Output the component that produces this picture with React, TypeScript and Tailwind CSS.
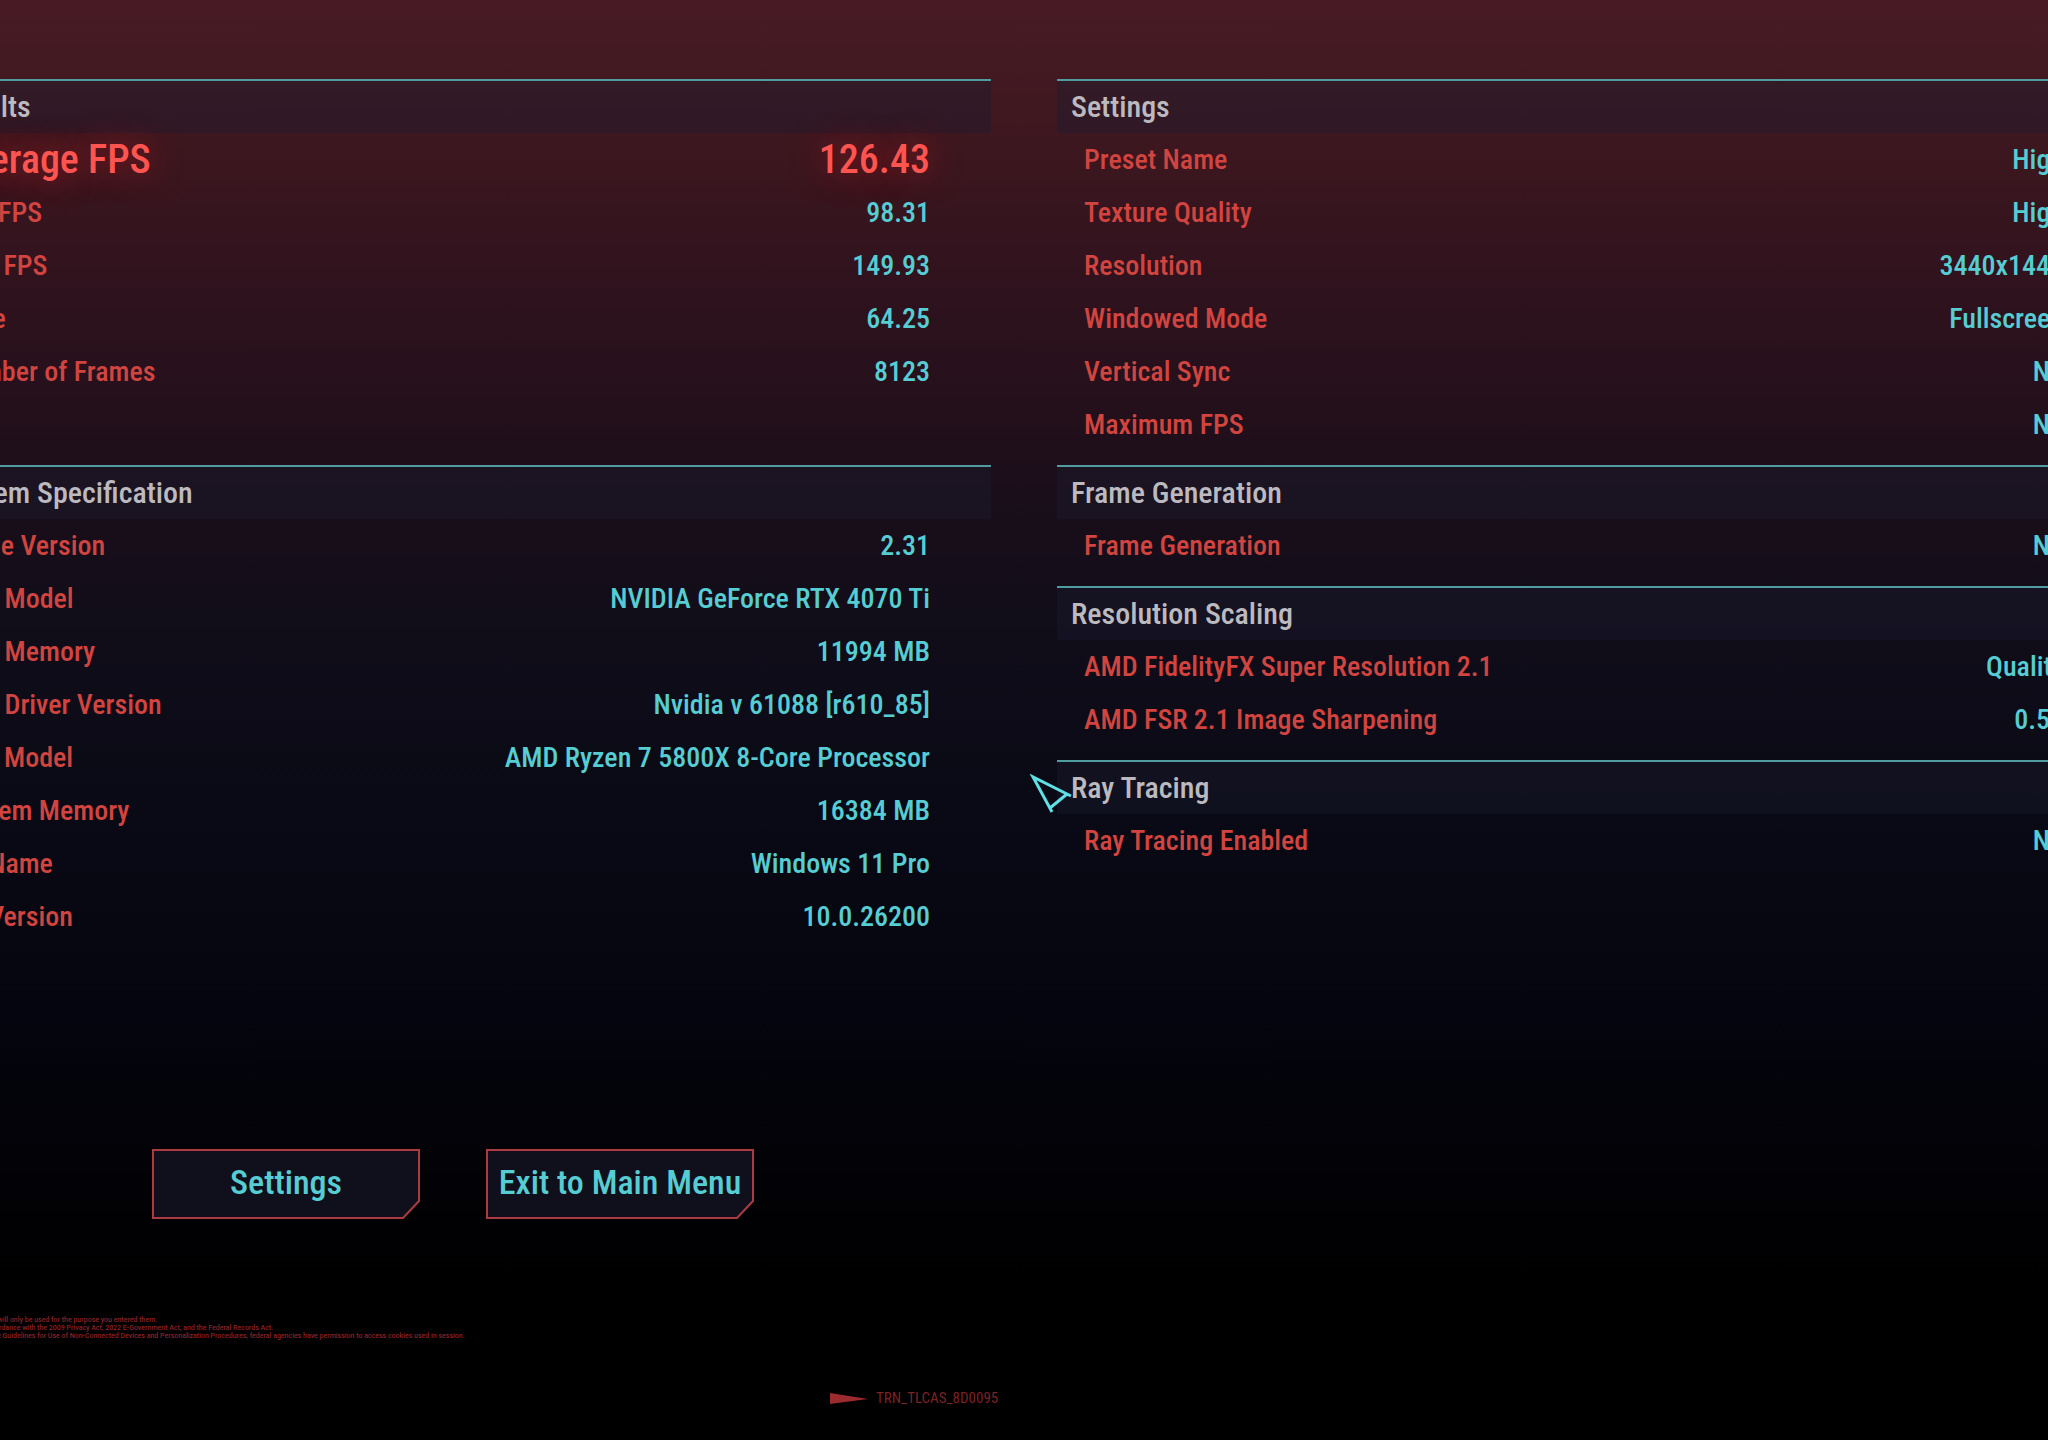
import type { ReactNode } from 'react'

interface Row {
  label: string
  value: string
  highlight?: boolean
}

interface SectionProps {
  title: string
  rows: Row[]
  className?: string
  labelPadding?: string
  valuePadding?: string
}

const results: Row[] = [
  { label: 'Average FPS', value: '126.43', highlight: true },
  { label: 'Min FPS', value: '98.31' },
  { label: 'Max FPS', value: '149.93' },
  { label: 'Time', value: '64.25' },
  { label: 'Number of Frames', value: '8123' },
]

const system: Row[] = [
  { label: 'Game Version', value: '2.31' },
  { label: 'GPU Model', value: 'NVIDIA GeForce RTX 4070 Ti' },
  { label: 'GPU Memory', value: '11994 MB' },
  { label: 'GPU Driver Version', value: 'Nvidia v 61088 [r610_85]' },
  { label: 'CPU Model', value: 'AMD Ryzen 7 5800X 8-Core Processor' },
  { label: 'System Memory', value: '16384 MB' },
  { label: 'OS Name', value: 'Windows 11 Pro' },
  { label: 'OS Version', value: '10.0.26200' },
]

const settings: Row[] = [
  { label: 'Preset Name', value: 'High' },
  { label: 'Texture Quality', value: 'High' },
  { label: 'Resolution', value: '3440x1440' },
  { label: 'Windowed Mode', value: 'Fullscreen' },
  { label: 'Vertical Sync', value: 'No' },
  { label: 'Maximum FPS', value: 'No' },
]

const frameGeneration: Row[] = [{ label: 'Frame Generation', value: 'No' }]

const scaling: Row[] = [
  { label: 'AMD FidelityFX Super Resolution 2.1', value: 'Quality' },
  { label: 'AMD FSR 2.1 Image Sharpening', value: '0.50' },
]

const rayTracing: Row[] = [{ label: 'Ray Tracing Enabled', value: 'No' }]

function Section({
  title,
  rows,
  className = '',
  labelPadding = 'pl-[27px]',
  valuePadding = 'pr-[56px]',
}: SectionProps) {
  return (
    <section className={`pb-3.5 ${className}`}>
      <h2 className="flex h-[54px] items-center border-t-2 border-[#4f9ca1] bg-[#1c1c30]/40 px-3.5 pb-0.5 text-[30px] font-medium text-[#bdbabf]">
        {title}
      </h2>
      <table className="w-full">
        <tbody>
          {rows.map(row => (
            <tr key={row.label} className="h-[53px] whitespace-nowrap">
              <th
                scope="row"
                className={`py-0 text-left leading-[53px] font-medium ${labelPadding} ${
                  row.highlight
                    ? 'text-[40px] text-[#ff5450] [text-shadow:0_0_32px_#ff2a2a80]'
                    : 'text-[28px] text-[#d1443f]'
                }`}
              >
                {row.label}
              </th>
              <td
                className={`py-0 text-right leading-[53px] font-medium ${valuePadding} ${
                  row.highlight
                    ? 'text-[40px] text-[#ff5450] [text-shadow:0_0_32px_#ff2a2a80]'
                    : 'text-[28px] text-[#56cdd2]'
                }`}
              >
                {row.value}
              </td>
            </tr>
          ))}
        </tbody>
      </table>
    </section>
  )
}

function MenuButton({ children }: { children: ReactNode }) {
  return (
    <button
      type="button"
      className="relative flex h-[70px] w-[268px] items-center justify-center pb-1 text-[34px] font-medium whitespace-nowrap text-[#56cdd2]"
    >
      {/* Frame with the cut corner */}
      <svg className="absolute inset-0 h-full w-full" viewBox="0 0 268 70" fill="none" aria-hidden="true">
        <path d="M1 1H267V52L251 69H1Z" fill="#10101d" stroke="#ab3b40" strokeWidth="2" />
      </svg>
      <span className="relative">{children}</span>
    </button>
  )
}

function Cursor() {
  return (
    <svg
      className="absolute top-[773px] left-[1030px] h-[42px] w-[44px]"
      viewBox="0 0 44 42"
      fill="none"
      stroke="#5fe0e4"
      strokeWidth="3"
      aria-hidden="true"
    >
      <path d="M41 23L3 4L22 39M37 21L20 35" />
    </svg>
  )
}

export default function App() {
  return (
    <main className="relative flex min-h-screen flex-col overflow-hidden bg-black bg-[linear-gradient(#481b24_0%,#3d171f_10%,#32131e_18%,#24101b_28%,#190e1a_35%,#100d19_44%,#090a15_56%,#04050e_70%,#020206_82%,#000_90%)] pt-[79px] font-['Roboto_Condensed','Roboto',sans-serif]">
      <div className="-mx-[72px] grid grid-cols-2 gap-[66px]">
        <div>
          <Section
            title="Results"
            rows={results}
            className="min-h-[386px]"
            labelPadding="pl-[22px]"
            valuePadding="pr-[61px]"
          />
          <Section title="System Specification" rows={system} labelPadding="pl-[22px]" valuePadding="pr-[61px]" />
        </div>
        <div>
          <Section title="Settings" rows={settings} />
          <Section title="Frame Generation" rows={frameGeneration} />
          <Section title="Resolution Scaling" rows={scaling} />
          <Section title="Ray Tracing" rows={rayTracing} />
        </div>
      </div>

      <div className="mt-48 flex gap-[66px] pl-[152px]">
        <MenuButton>Settings</MenuButton>
        <MenuButton>Exit to Main Menu</MenuButton>
      </div>

      <div className="mt-[97px] -ml-[70px] font-['Roboto',sans-serif] text-[7px] leading-[8px] font-medium whitespace-nowrap text-[#8a2228]">
        <p>Personal information will only be used for the purpose you entered them.</p>
        <p>Processed in full accordance with the 2009 Privacy Act, 2022 E-Government Act, and the Federal Records Act.</p>
        <p>
          In accordance with the Guidelines for Use of Non-Connected Devices and Personalization Procedures, federal
          agencies have permission to access cookies used in session.
        </p>
      </div>

      <div className="mt-12 flex items-center gap-2 pl-[830px] text-[15px] leading-5 text-[#7b2226]">
        <svg className="h-[11px] w-[38px]" viewBox="0 0 38 11" fill="#9c2b2d" aria-hidden="true">
          <path d="M0 0L38 6L0 11Z" />
        </svg>
        <span>TRN_TLCAS_8D0095</span>
      </div>

      <Cursor />
    </main>
  )
}
